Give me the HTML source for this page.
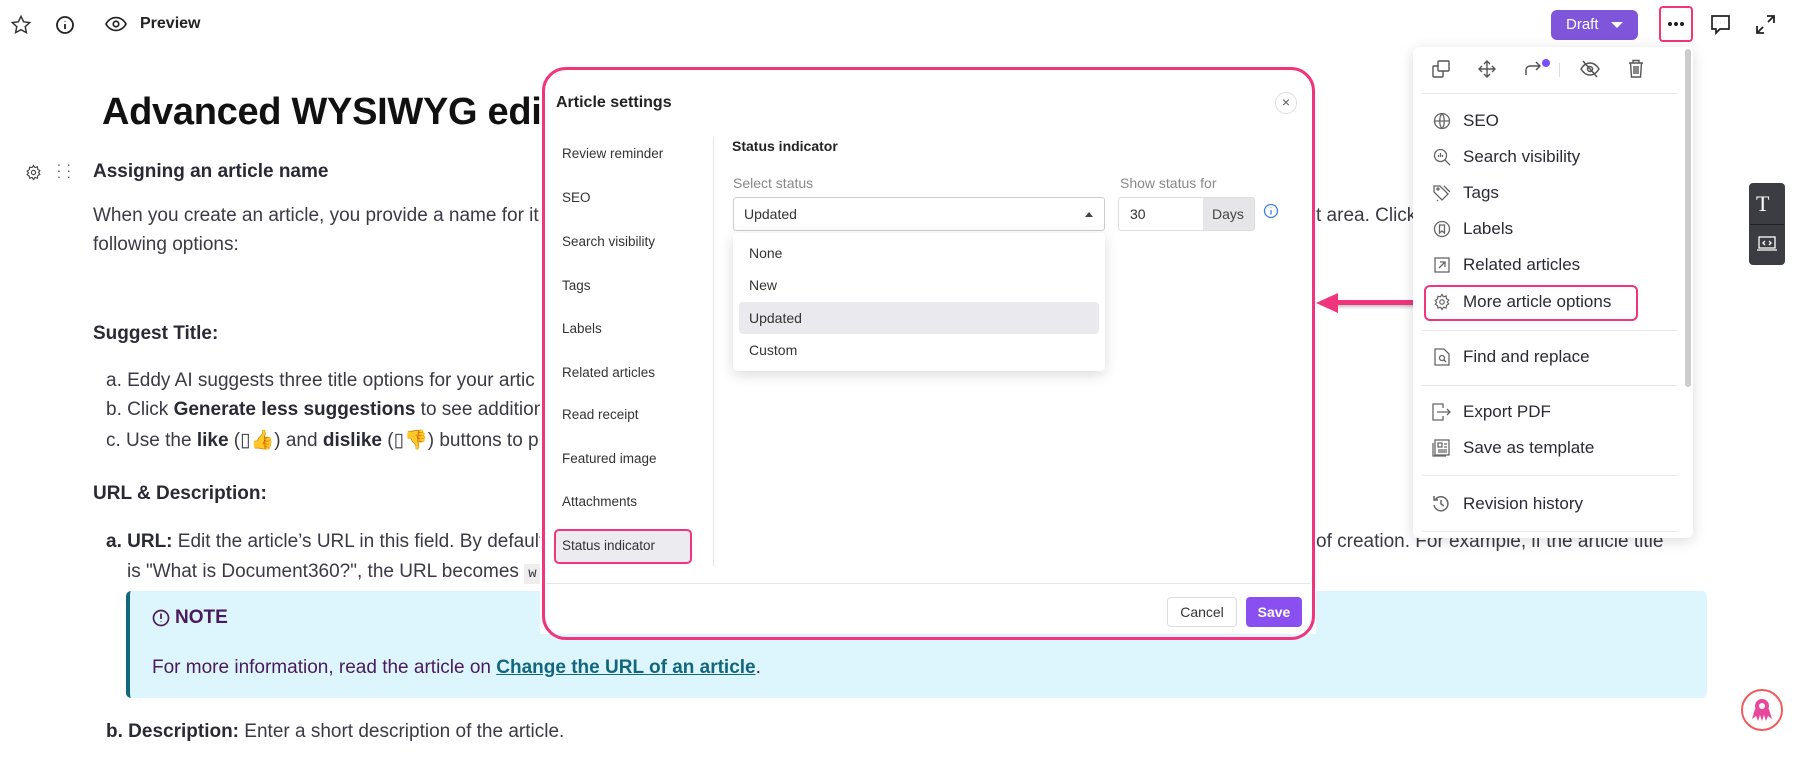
<!DOCTYPE html>
<html><head><meta charset="utf-8"><style>
*{box-sizing:border-box;margin:0;padding:0}
body{width:1794px;height:766px;position:relative;overflow:hidden;background:#fff;font-family:"Liberation Sans",sans-serif;color:#2f2f3a}
.a{position:absolute;white-space:nowrap}
.t{font-size:19px;color:#3a3a44}
b{color:#2a2a35}
.side{font-size:13.5px;color:#333;font-weight:500}
.mi{font-size:17px;color:#2a2a35}
.ic{position:absolute}
</style></head><body>

<!-- top bar -->
<svg class="ic" style="left:10px;top:14px" width="22" height="22" viewBox="0 0 24 24" fill="none" stroke="#333" stroke-width="1.6"><path d="M12 2.5l2.9 6 6.6.8-4.9 4.5 1.3 6.5L12 17.1 6.1 20.3l1.3-6.5L2.5 9.3l6.6-.8z"/></svg>
<svg class="ic" style="left:55px;top:15px" width="20" height="20" viewBox="0 0 20 20" fill="none" stroke="#222" stroke-width="1.8"><circle cx="10" cy="10" r="8"/><path d="M10 9v5M10 6v.5"/></svg>
<svg class="ic" style="left:105px;top:15px" width="22" height="18" viewBox="0 0 24 18" fill="none" stroke="#222" stroke-width="1.8"><path d="M1 9c3-5 7-7 11-7s8 2 11 7c-3 5-7 7-11 7S4 14 1 9z"/><circle cx="12" cy="9" r="3"/></svg>
<div class="a" style="left:140px;top:15px;font-size:16px;font-weight:bold;color:#222">Preview</div>

<div class="a" style="left:1551px;top:10px;width:87px;height:30px;background:#7f56d9;border-radius:6px;color:#fff;font-size:15px;line-height:30px;padding-left:15px">Draft <span style="display:inline-block;margin-left:8px;border-left:6px solid transparent;border-right:6px solid transparent;border-top:6px solid #fff;vertical-align:middle"></span></div>
<div class="a" style="left:1659px;top:6px;width:34px;height:36px;border:2.5px solid #f0357d;border-radius:4px"></div>
<div class="a" style="left:1668px;top:22px;width:4px;height:4px;border-radius:50%;background:#222;box-shadow:6px 0 0 #222,12px 0 0 #222"></div>
<svg class="ic" style="left:1710px;top:14px" width="21" height="21" viewBox="0 0 21 21" fill="none" stroke="#222" stroke-width="1.7"><path d="M2 2h17v13H10l-4 4v-4H2z"/><path d="M6.5 8.5h.1M10.5 8.5h.1M14.5 8.5h.1" stroke-width="2.2"/></svg>
<svg class="ic" style="left:1755px;top:14px" width="21" height="21" viewBox="0 0 21 21" fill="none" stroke="#222" stroke-width="1.8"><path d="M12 2h7v7M19 2l-6 6M9 19H2v-7M2 19l6-6"/></svg>

<!-- article -->
<div class="a" style="left:102px;top:91px;font-size:38px;font-weight:bold;color:#111;letter-spacing:-0.3px">Advanced WYSIWYG edi</div>
<svg class="ic" style="left:25px;top:164px" width="17" height="17" viewBox="0 0 24 24" fill="none" stroke="#444" stroke-width="1.6"><circle cx="12" cy="12" r="3"/><path d="M12 2l2 3 3.5-1 .5 3.5 3 2-2 2.5 2 2.5-3 2-.5 3.5-3.5-1-2 3-2-3-3.5 1L6 17l-3-2 2-2.5L3 10l3-2 .5-3.5L10 5z"/></svg>
<div class="a" style="left:57px;top:164px;font-size:14px;color:#555;line-height:6px;letter-spacing:1px">:&nbsp;:<br>:&nbsp;:</div>
<div class="a t" style="left:93px;top:161px"><b>Assigning an article name</b></div>
<div class="a t" style="left:93px;top:205px">When you create an article, you provide a name for it</div>
<div class="a t" style="left:93px;top:234px">following options:</div>
<div class="a t" style="left:1316px;top:205px">t area. Click</div>
<div class="a t" style="left:1668px;top:205px">e</div>
<div class="a t" style="left:93px;top:323px"><b>Suggest Title:</b></div>
<div class="a t" style="left:106px;top:370px">a. Eddy AI suggests three title options for your artic</div>
<div class="a t" style="left:106px;top:399px">b. Click <b>Generate less suggestions</b> to see additiona</div>
<div class="a t" style="left:106px;top:428px">c. Use the <b>like</b> (▯👍) and <b>dislike</b> (▯👎) buttons to provic</div>
<div class="a t" style="left:93px;top:483px"><b>URL &amp; Description:</b></div>
<div class="a t" style="left:106px;top:531px"><b>a. URL:</b> Edit the article’s URL in this field. By default</div>
<div class="a t" style="left:1316px;top:531px">of creation. For example, if the article title</div>
<div class="a t" style="left:127px;top:561px">is "What is Document360?", the URL becomes <span style="background:#eee;font-family:'Liberation Mono',monospace;font-size:14px;padding:2px 4px">w</span></div>
<div class="a" style="left:126px;top:591px;width:1581px;height:107px;background:#ddf5fc;border-left:4px solid #13677c;border-radius:5px"></div>
<svg class="ic" style="left:152px;top:609px" width="18" height="18" viewBox="0 0 18 18" fill="none" stroke="#4a1a5e" stroke-width="1.7"><circle cx="9" cy="9" r="7.5"/><path d="M9 4.5v5.5M9 12.5v.5"/></svg>
<div class="a" style="left:175px;top:607px;font-size:19px;font-weight:bold;color:#4a1a5e">NOTE</div>
<div class="a" style="left:152px;top:657px;font-size:19px;color:#4a1a5e">For more information, read the article on <b style="color:#13677c;text-decoration:underline">Change the URL of an article</b>.</div>
<div class="a t" style="left:106px;top:721px"><b>b. Description:</b> Enter a short description of the article.</div>

<!-- modal -->
<div class="a" style="left:540px;top:68px;width:776px;height:566px;background:#fff"></div>
<div class="a" style="left:542px;top:67px;width:773px;height:573px;border:3px solid #f0357d;border-radius:24px"></div>
<div class="a" style="left:556px;top:94px;font-size:16px;font-weight:bold;color:#222">Article settings</div>
<div class="a" style="left:1275px;top:92px;width:22px;height:22px;border:1px solid #ddd;border-radius:50%;text-align:center;line-height:19px;font-size:14px;color:#555">×</div>
<div class="a side" style="left:562px;top:146px">Review reminder</div>
<div class="a side" style="left:562px;top:190px">SEO</div>
<div class="a side" style="left:562px;top:234px">Search visibility</div>
<div class="a side" style="left:562px;top:278px">Tags</div>
<div class="a side" style="left:562px;top:321px">Labels</div>
<div class="a side" style="left:562px;top:365px">Related articles</div>
<div class="a side" style="left:562px;top:407px">Read receipt</div>
<div class="a side" style="left:562px;top:451px">Featured image</div>
<div class="a side" style="left:562px;top:494px">Attachments</div>
<div class="a" style="left:554px;top:529px;width:138px;height:35px;background:#ececf0;border:2.5px solid #f0357d;border-radius:5px"></div>
<div class="a side" style="left:562px;top:538px">Status indicator</div>
<div class="a" style="left:713px;top:137px;width:1px;height:429px;background:#e6e6e6"></div>
<div class="a" style="left:732px;top:138px;font-size:14px;font-weight:600;color:#222">Status indicator</div>
<div class="a" style="left:733px;top:175px;font-size:14px;color:#888">Select status</div>
<div class="a" style="left:733px;top:197px;width:372px;height:34px;border:1px solid #ccc;border-radius:3px"></div>
<div class="a" style="left:744px;top:206px;font-size:14px;color:#333">Updated</div>
<div class="a" style="left:1085px;top:212px;border-left:4px solid transparent;border-right:4px solid transparent;border-bottom:5px solid #444"></div>
<div class="a" style="left:1120px;top:175px;font-size:14px;color:#888">Show status for</div>
<div class="a" style="left:1118px;top:197px;width:137px;height:34px;border:1px solid #ddd;border-radius:3px;overflow:hidden"><div style="position:absolute;left:84px;top:0;width:53px;height:34px;background:#e6e6e8"></div></div>
<div class="a" style="left:1130px;top:206px;font-size:14px;color:#333">30</div>
<div class="a" style="left:1212px;top:206px;font-size:14px;color:#444">Days</div>
<svg class="ic" style="left:1263px;top:203px" width="16" height="16" viewBox="0 0 16 16" fill="none" stroke="#3b82f6" stroke-width="1.3"><circle cx="8" cy="8" r="6.5"/><path d="M8 7v4.5M8 4.5v.5"/></svg>
<div class="a" style="left:733px;top:233px;width:372px;height:138px;background:#fff;border-radius:4px;box-shadow:0 4px 14px rgba(0,0,0,.14)"></div>
<div class="a" style="left:739px;top:302px;width:360px;height:32px;background:#e9e9ee;border-radius:4px"></div>
<div class="a" style="left:749px;top:245px;font-size:14px;color:#333">None</div>
<div class="a" style="left:749px;top:277px;font-size:14px;color:#333">New</div>
<div class="a" style="left:749px;top:310px;font-size:14px;color:#333">Updated</div>
<div class="a" style="left:749px;top:342px;font-size:14px;color:#333">Custom</div>
<div class="a" style="left:546px;top:583px;width:765px;height:1px;background:#e6e6e6"></div>
<div class="a" style="left:1167px;top:597px;width:70px;height:30px;border:1px solid #ddd;border-radius:4px;text-align:center;line-height:28px;font-size:14px;color:#333">Cancel</div>
<div class="a" style="left:1246px;top:597px;width:56px;height:30px;background:#8a4ff0;border-radius:4px;text-align:center;line-height:30px;font-size:14px;color:#fff;font-weight:600">Save</div>

<!-- arrow -->
<div class="a" style="left:1330px;top:300px;width:92px;height:5px;background:#f0357d;border-radius:3px;box-shadow:0 2px 3px rgba(0,0,0,.25)"></div>
<div class="a" style="left:1316px;top:293px;border-top:10px solid transparent;border-bottom:10px solid transparent;border-right:22px solid #f0357d"></div>

<!-- dropdown menu -->
<div class="a" style="left:1413px;top:47px;width:280px;height:491px;background:#fff;border-radius:6px;box-shadow:0 3px 14px rgba(0,0,0,.15)"></div>
<div class="a" style="left:1685px;top:49px;width:6px;height:338px;background:#ccc;border-radius:3px"></div>
<svg class="ic" style="left:1432px;top:60px" width="18" height="18" viewBox="0 0 18 18" fill="none" stroke="#555" stroke-width="1.4"><rect x="1" y="6" width="10" height="11" rx="1"/><rect x="6" y="1" width="11" height="10" rx="1" fill="#fff"/></svg>
<svg class="ic" style="left:1478px;top:60px" width="18" height="18" viewBox="0 0 18 18" fill="none" stroke="#555" stroke-width="1.4"><path d="M9 1v16M1 9h16M6 4l3-3 3 3M6 14l3 3 3-3M4 6L1 9l3 3M14 6l3 3-3 3"/></svg>
<svg class="ic" style="left:1524px;top:61px" width="18" height="16" viewBox="0 0 18 16" fill="none" stroke="#555" stroke-width="1.5"><path d="M2 14V9a4 4 0 014-4h10M12 1l4 4-4 4"/></svg>
<div class="a" style="left:1542px;top:59px;width:8px;height:8px;border-radius:50%;background:#7c4dff"></div>
<div class="a" style="left:1559px;top:63px;width:1px;height:14px;background:#ddd"></div>
<svg class="ic" style="left:1580px;top:60px" width="20" height="18" viewBox="0 0 20 18" fill="none" stroke="#555" stroke-width="1.5"><path d="M1 9c3-5 6-6 9-6s6 1 9 6c-3 5-6 6-9 6S4 14 1 9z"/><circle cx="10" cy="9" r="2.5"/><path d="M3 1l14 16"/></svg>
<svg class="ic" style="left:1628px;top:59px" width="16" height="19" viewBox="0 0 16 19" fill="none" stroke="#555" stroke-width="1.4"><path d="M1 4h14M5 4V1.5h6V4M2.5 4l1 14h9l1-14M6 7v8M8 7v8M10 7v8"/></svg>
<div class="a" style="left:1422px;top:93px;width:255px;height:1px;background:#e8e8e8"></div>
<svg class="ic" style="left:1433px;top:112px" width="18" height="18" viewBox="0 0 18 18" fill="none" stroke="#666" stroke-width="1.3"><circle cx="9" cy="9" r="7.5"/><path d="M1.5 9h15M9 1.5c-3 3-3 12 0 15M9 1.5c3 3 3 12 0 15"/></svg>
<div class="a mi" style="left:1463px;top:111px">SEO</div>
<svg class="ic" style="left:1433px;top:148px" width="18" height="18" viewBox="0 0 18 18" fill="none" stroke="#666" stroke-width="1.3"><circle cx="7.5" cy="7.5" r="6"/><path d="M12 12l5 5M5.5 9V7M7.5 9V5M9.5 9V7"/></svg>
<div class="a mi" style="left:1463px;top:147px">Search visibility</div>
<svg class="ic" style="left:1433px;top:184px" width="18" height="18" viewBox="0 0 18 18" fill="none" stroke="#666" stroke-width="1.3"><path d="M1 2v6l8 8 6-6-8-8zM5 16l-1 1M11 2l6 6"/><circle cx="5" cy="5" r="1"/></svg>
<div class="a mi" style="left:1463px;top:183px">Tags</div>
<svg class="ic" style="left:1433px;top:220px" width="18" height="18" viewBox="0 0 18 18" fill="none" stroke="#666" stroke-width="1.3"><circle cx="9" cy="9" r="7.5"/><path d="M6.5 5h5v8L9 11l-2.5 2z"/></svg>
<div class="a mi" style="left:1463px;top:219px">Labels</div>
<svg class="ic" style="left:1433px;top:256px" width="18" height="18" viewBox="0 0 18 18" fill="none" stroke="#666" stroke-width="1.3"><rect x="2" y="2" width="14" height="14"/><path d="M6 12l6-6M7 6h5v5"/></svg>
<div class="a mi" style="left:1463px;top:255px">Related articles</div>
<div class="a" style="left:1424px;top:285px;width:214px;height:36px;border:2.5px solid #f0357d;border-radius:6px"></div>
<svg class="ic" style="left:1433px;top:293px" width="18" height="18" viewBox="0 0 24 24" fill="none" stroke="#666" stroke-width="1.6"><circle cx="12" cy="12" r="3"/><path d="M12 2l2 3 3.5-1 .5 3.5 3 2-2 2.5 2 2.5-3 2-.5 3.5-3.5-1-2 3-2-3-3.5 1L6 17l-3-2 2-2.5L3 10l3-2 .5-3.5L10 5z"/></svg>
<div class="a mi" style="left:1463px;top:292px">More article options</div>
<div class="a" style="left:1422px;top:330px;width:255px;height:1px;background:#e8e8e8"></div>
<svg class="ic" style="left:1434px;top:348px" width="16" height="18" viewBox="0 0 16 18" fill="none" stroke="#666" stroke-width="1.3"><path d="M1 1h9l5 5v11H1z"/><circle cx="8" cy="10" r="2.5"/><path d="M10 12l2 2"/></svg>
<div class="a mi" style="left:1463px;top:347px">Find and replace</div>
<div class="a" style="left:1422px;top:385px;width:255px;height:1px;background:#e8e8e8"></div>
<svg class="ic" style="left:1432px;top:403px" width="20" height="18" viewBox="0 0 20 18" fill="none" stroke="#666" stroke-width="1.3"><path d="M11 5V1H1v16h10v-4M5 9h13M15 6l3 3-3 3"/></svg>
<div class="a mi" style="left:1463px;top:402px">Export PDF</div>
<svg class="ic" style="left:1432px;top:439px" width="18" height="18" viewBox="0 0 18 18" fill="none" stroke="#666" stroke-width="1.3"><rect x="3" y="1" width="14" height="15"/><path d="M1 4v13h13M6 4h4v4H6zM12 5h3M12 8h3M6 11h9M6 13h9"/></svg>
<div class="a mi" style="left:1463px;top:438px">Save as template</div>
<div class="a" style="left:1422px;top:475px;width:255px;height:1px;background:#e8e8e8"></div>
<svg class="ic" style="left:1432px;top:495px" width="18" height="18" viewBox="0 0 18 18" fill="none" stroke="#666" stroke-width="1.5"><path d="M3 5a7 7 0 11-1 5M2 1v4h4M9 5v4l3 2"/></svg>
<div class="a mi" style="left:1463px;top:494px">Revision history</div>
<div class="a" style="left:1422px;top:531px;width:255px;height:1px;background:#e8e8e8"></div>

<!-- right toolbar -->
<div class="a" style="left:1749px;top:183px;width:36px;height:82px;background:#3c3d42;border-radius:4px"></div>
<div class="a" style="left:1750px;top:224px;width:34px;height:1px;background:#222"></div>
<div class="a" style="left:1756px;top:191px;font-family:'Liberation Serif',serif;font-size:22px;color:#fff">T</div>
<svg class="ic" style="left:1756px;top:235px" width="22" height="18" viewBox="0 0 22 18" fill="none" stroke="#fff" stroke-width="1.3"><rect x="3" y="2" width="16" height="11"/><path d="M1 15h20M9 6l-2 2 2 2M13 6l2 2-2 2"/></svg>

<!-- bot -->
<div class="a" style="left:1741px;top:689px;width:42px;height:42px;border:2px solid #f25b5b;border-radius:50%"></div>
<svg class="ic" style="left:1750px;top:697px" width="24" height="26" viewBox="0 0 24 26" fill="#e8489a"><circle cx="12" cy="9" r="7"/><path d="M5 12l-3 10 4-3 2 5 2-6 2 6 2-6 2 6 2-5 4 3-3-10z"/><circle cx="12" cy="9" r="3" fill="#fff"/></svg>
</body></html>
